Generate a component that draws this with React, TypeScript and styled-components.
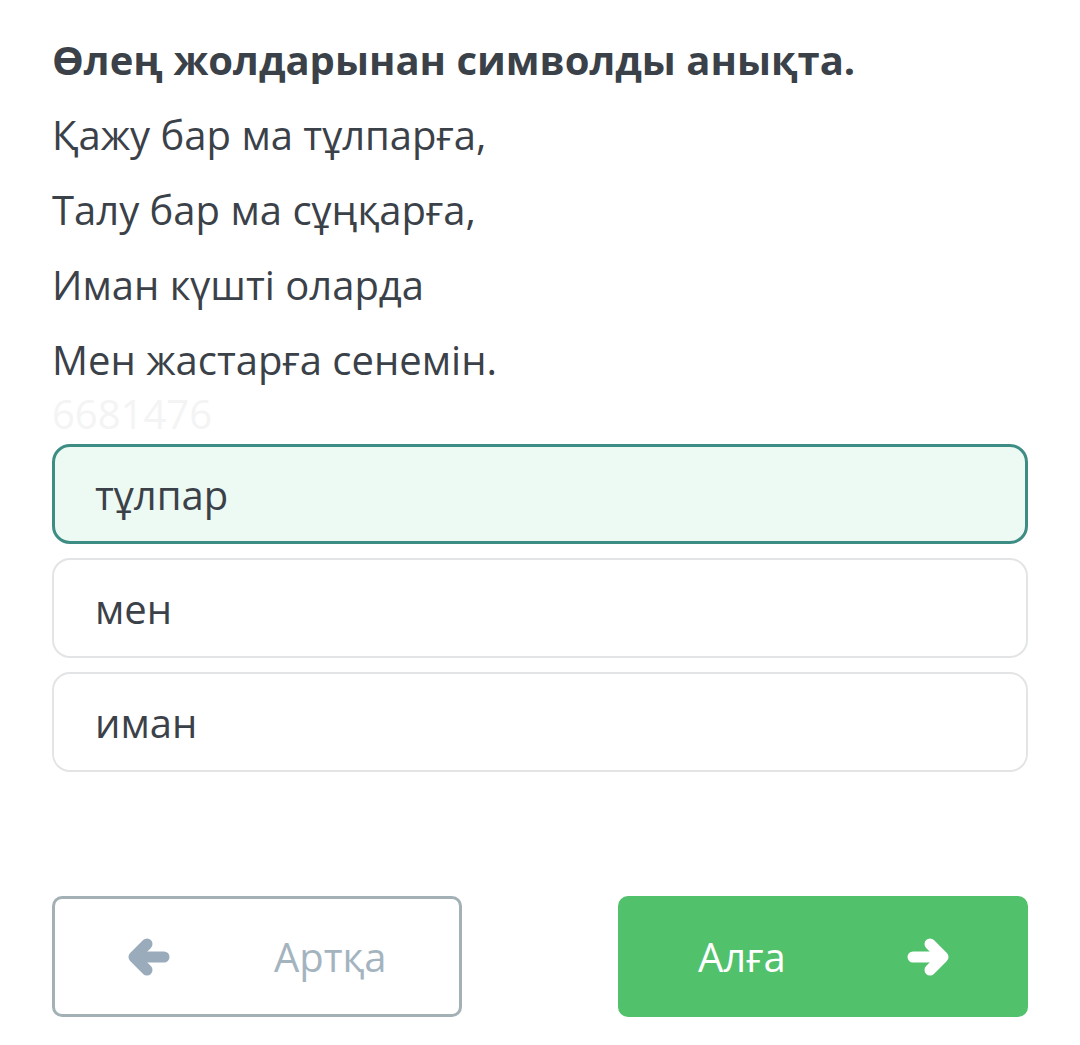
import React, { useState } from "react";
import styled, { createGlobalStyle } from "styled-components";

const Global = createGlobalStyle`
  html, body {
    margin: 0;
    padding: 0;
    background: #ffffff;
    font-family: "Open Sans", "Noto Sans", sans-serif;
  }
`;

const Page = styled.div`
  width: 1080px;
  height: 1045px;
  box-sizing: border-box;
  padding: 22px 52px 0 52px;
  display: flex;
  flex-direction: column;
`;

const Title = styled.h2`
  margin: 0;
  font-size: 40px;
  line-height: 75px;
  font-weight: 700;
  color: #3b4148;
`;

const Line = styled.p`
  margin: 0;
  font-size: 40px;
  line-height: 75px;
  color: #3b4148;
`;

const Watermark = styled.div`
  font-size: 40px;
  line-height: 40px;
  color: #f4f4f4;
  margin-top: -3px;
`;

const Options = styled.div`
  display: flex;
  flex-direction: column;
  gap: 14px;
  margin-top: 10px;
`;

const Option = styled.div<{ $active?: boolean }>`
  height: 100px;
  box-sizing: border-box;
  display: flex;
  align-items: center;
  border-radius: 18px;
  border: ${(p) => (p.$active ? "3px solid #3e8d85" : "2px solid #e2e4e5")};
  background: ${(p) => (p.$active ? "#edf9f3" : "#ffffff")};
  font-size: 40px;
  color: #3b4148;
  cursor: pointer;
  padding-left: ${(p) => (p.$active ? "40px" : "41px")};
`;

const Nav = styled.div`
  display: flex;
  justify-content: space-between;
  margin-top: 124px;
`;

const NavButton = styled.button<{ $primary?: boolean }>`
  width: 410px;
  height: 121px;
  box-sizing: border-box;
  border-radius: 10px;
  border: ${(p) => (p.$primary ? "none" : "3px solid #a3b1b7")};
  background: ${(p) => (p.$primary ? "#51c16c" : "#ffffff")};
  color: ${(p) => (p.$primary ? "#ffffff" : "#a4b4bf")};
  font-family: "Open Sans", "Noto Sans", sans-serif;
  font-size: 40px;
  display: flex;
  align-items: center;
  padding: 0;
  cursor: pointer;
`;

const Arrow = styled.svg<{ $tone: string }>`
  width: 42px;
  height: 38px;
  flex: none;
  color: ${(p) => p.$tone};
`;

const BackArrowWrap = styled.span`
  display: flex;
  margin-left: 73px;
`;

const NextArrowWrap = styled.span`
  display: flex;
  margin-left: auto;
  margin-right: 79px;
`;

const BackLabel = styled.span`
  margin-left: 104px;
`;

const NextLabel = styled.span`
  margin-left: 80px;
`;

function ArrowIcon({ dir, tone }: { dir: "left" | "right"; tone: string }) {
  return (
    <Arrow $tone={tone} viewBox="0 0 42 38">
      <g
        transform={dir === "right" ? "translate(42 0) scale(-1 1)" : undefined}
        fill="none"
        stroke="currentColor"
        strokeWidth={11}
        strokeLinecap="round"
        strokeLinejoin="round"
      >
        <path d="M19 6 L6 19 L19 32" />
        <path d="M8 19 H36" />
      </g>
      <path
        d={dir === "right" ? "M23 9 L34 19 L23 29 Z" : "M19 9 L8 19 L19 29 Z"}
        fill="currentColor"
      />
    </Arrow>
  );
}

const lines = [
  "Қажу бар ма тұлпарға,",
  "Талу бар ма сұңқарға,",
  "Иман күшті оларда",
  "Мен жастарға сенемін.",
];

const answers = ["тұлпар", "мен", "иман"];

export default function App() {
  const [picked, setPicked] = useState(0);
  return (
    <>
      <Global />
      <Page>
        <Title>Өлең жолдарынан символды анықта.</Title>
        {lines.map((l) => (
          <Line key={l}>{l}</Line>
        ))}
        <Watermark>6681476</Watermark>
        <Options>
          {answers.map((a, i) => (
            <Option key={a} $active={picked === i} onClick={() => setPicked(i)}>
              {a}
            </Option>
          ))}
        </Options>
        <Nav>
          <NavButton>
            <BackArrowWrap>
              <ArrowIcon dir="left" tone="#9aacbb" />
            </BackArrowWrap>
            <BackLabel>Артқа</BackLabel>
          </NavButton>
          <NavButton $primary>
            <NextLabel>Алға</NextLabel>
            <NextArrowWrap>
              <ArrowIcon dir="right" tone="#ffffff" />
            </NextArrowWrap>
          </NavButton>
        </Nav>
      </Page>
    </>
  );
}
